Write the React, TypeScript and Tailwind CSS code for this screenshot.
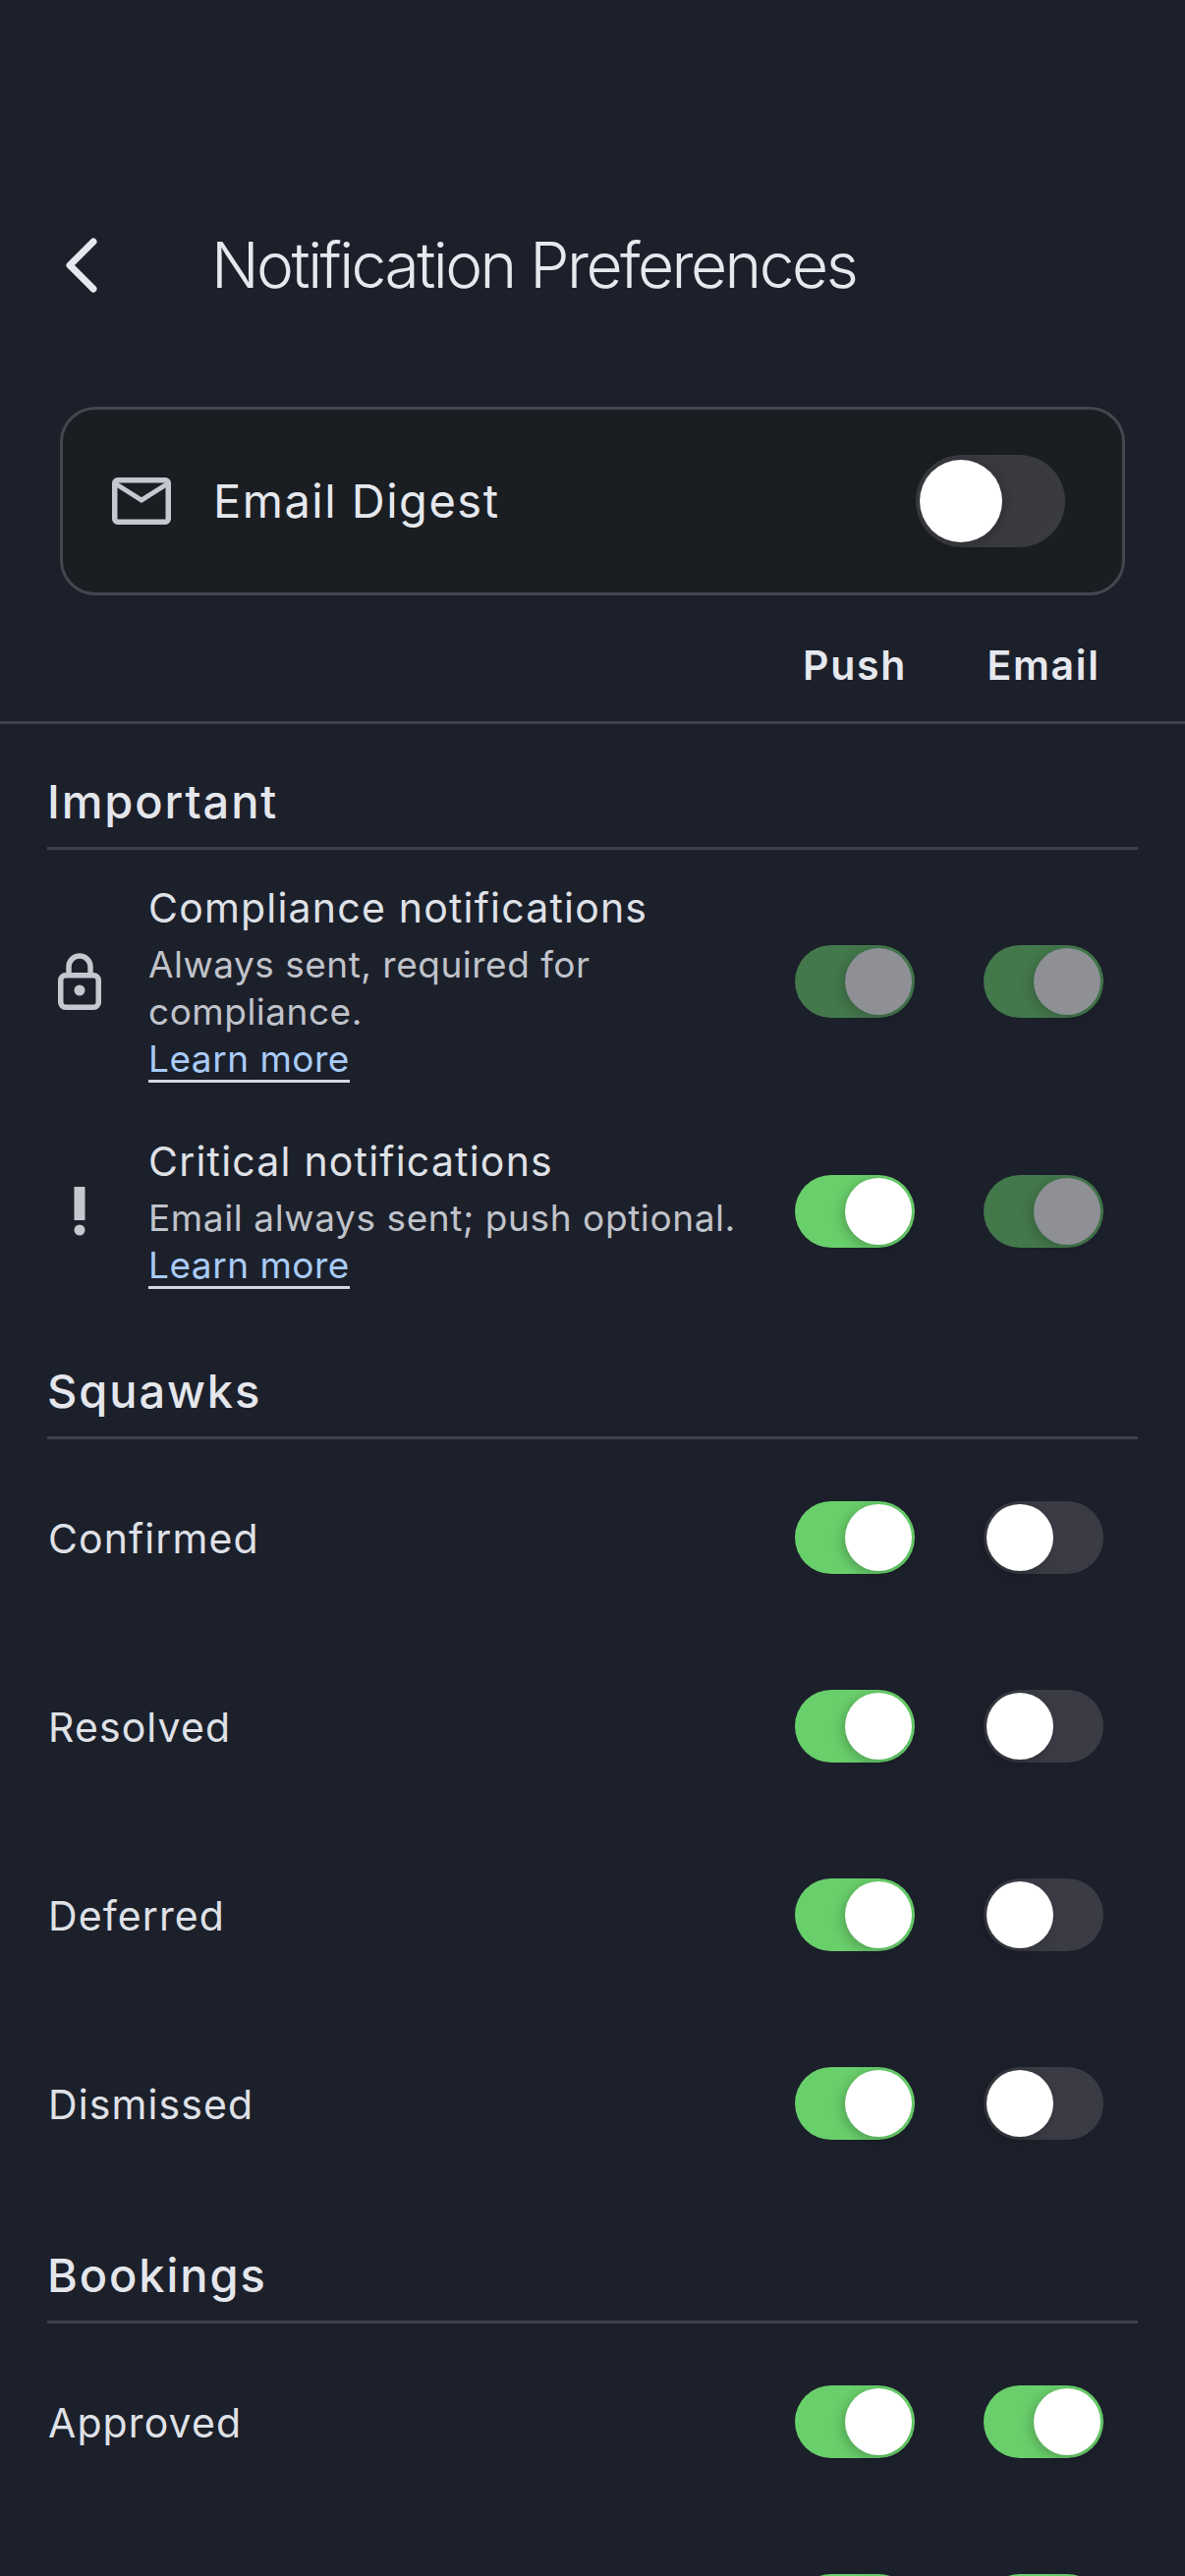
import React from "react";

// Notification preferences screen, dark theme

const Toggle = ({
  on = false,
  disabled = false,
}: {
  on?: boolean;
  disabled?: boolean;
}) => {
  return (
    <div
      className={`flex h-[74px] w-[122px] shrink-0 items-center rounded-full px-[3px] ${
        on ? "justify-end bg-[#69cf6b]" : "justify-start bg-[#3a3b44]"
      } ${disabled ? "opacity-50" : ""}`}
    >
      <div className="h-[68px] w-[68px] rounded-full bg-white shadow-[-3px_3px_12px_rgba(0,0,0,0.22)]" />
    </div>
  );
};

const LearnMore = () => (
  <a className="block w-fit border-b-[3px] border-[#d5d8de] pt-[2px] text-[37px] leading-[43px] tracking-[0.5px] text-[#a9cbf7]">
    Learn more
  </a>
);

const SectionTitle = ({ title }: { title: string }) => (
  <div className="mx-[48px] mb-[4px] flex h-[128px] items-end border-b-[3px] border-[#3f424c] pb-[19px]">
    <span className="text-[47px] font-medium leading-[54px] tracking-[1.9px] text-[#e4e6ec]">
      {title}
    </span>
  </div>
);

const SimpleRow = ({
  label,
  push = true,
  email = false,
}: {
  label: string;
  push?: boolean;
  email?: boolean;
}) => (
  <div className="flex h-[192px] items-center pl-[49px] pr-[83px]">
    <span className="mt-[3px] flex-1 text-[41px] tracking-[1.1px] text-[#dfe1e7]">
      {label}
    </span>
    <div className="flex gap-[70px]">
      <Toggle on={push} />
      <Toggle on={email} />
    </div>
  </div>
);

export default function App() {
  return (
    <div className="h-[2622px] w-[1206px] overflow-hidden bg-[#1c202b] font-['Inter','Noto_Sans',sans-serif]">
      {/* Top bar */}
      <div className="h-[414px] pl-[62px] pt-[232px]">
        <div className="flex h-[76px] items-center">
          <svg width="40" height="64" viewBox="0 0 40 64" fill="none">
            <path d="M33 8 L9 32 L33 56" stroke="#e6e8ee" strokeWidth="7" strokeLinecap="round" strokeLinejoin="round" />
          </svg>
          <h1 className="ml-[113px] text-[64px] font-[350] leading-[76px] tracking-[-2.5px] text-[#e6e8ee]">
            Notification Preferences
          </h1>
        </div>
      </div>

      {/* Email digest card */}
      <div className="mx-[61px] flex h-[192px] items-center rounded-[36px] border-[3px] border-[#44474e] bg-[#1a1d22] pl-[50px] pr-[58px]">
        <svg width="60" height="48" viewBox="0 0 60 48" fill="none">
          <rect x="2.75" y="2.75" width="54.5" height="42.5" rx="3" stroke="#c4c8cf" strokeWidth="5.5" />
          <path d="M3 6 L30 23 L57 6" stroke="#c4c8cf" strokeWidth="5" />
        </svg>
        <span className="ml-[43px] flex-1 text-[47px] tracking-[1.5px] text-[#e6e8ee]">
          Email Digest
        </span>
        <div className="flex h-[94px] w-[152px] items-center rounded-full bg-[#3a3b40] px-[4px]">
          <div className="h-[84px] w-[84px] rounded-full bg-white shadow-[2px_2px_14px_rgba(0,0,0,0.25)]" />
        </div>
      </div>

      {/* Column headings */}
      <div className="flex h-[131px] items-center justify-end gap-[70px] border-b-[3px] border-[#3f424c] pr-[83px] pt-[16px]">
        <span className="w-[122px] text-center text-[41px] font-semibold tracking-[1.7px] text-[#e6e8ee]">
          Push
        </span>
        <span className="w-[122px] text-center text-[41px] font-semibold tracking-[1.7px] text-[#e6e8ee]">
          Email
        </span>
      </div>

      <SectionTitle title="Important" />

      {/* Compliance */}
      <div className="flex h-[260px] items-center pl-[59px] pr-[83px]">
        <svg width="44" height="58" viewBox="0 0 44 58" fill="none" className="shrink-0">
          <rect x="2.75" y="22.75" width="38.5" height="32.5" rx="5" stroke="#c4c8cf" strokeWidth="5.5" />
          <path d="M11 20 V14 a11 11 0 0 1 22 0 V20" stroke="#c4c8cf" strokeWidth="5.5" />
          <circle cx="22" cy="38" r="5.5" fill="#c4c8cf" />
        </svg>
        <div className="ml-[48px] mt-[4px] flex-1">
          <div className="text-[41px] leading-[48px] tracking-[1.2px] text-[#dfe1e7]">
            Compliance notifications
          </div>
          <div className="mt-[10px] w-[520px] text-[37px] leading-[48px] tracking-[0.5px] text-[#c0c3ca]">
            Always sent, required for compliance.
          </div>
          <LearnMore />
        </div>
        <div className="flex gap-[70px]">
          <Toggle on disabled />
          <Toggle on disabled />
        </div>
      </div>

      {/* Critical */}
      <div className="flex h-[208px] items-center pl-[59px] pr-[83px]">
        <svg width="44" height="50" viewBox="0 0 44 50" fill="none" className="shrink-0">
          <rect x="16.5" y="0" width="11" height="34" fill="#c4c8cf" />
          <circle cx="22" cy="44" r="5.5" fill="#c4c8cf" />
        </svg>
        <div className="ml-[48px] mt-[4px] flex-1">
          <div className="text-[41px] leading-[48px] tracking-[1.2px] text-[#dfe1e7]">
            Critical notifications
          </div>
          <div className="mt-[10px] text-[37px] leading-[48px] tracking-[0.6px] text-[#c0c3ca]">
            Email always sent; push optional.
          </div>
          <LearnMore />
        </div>
        <div className="flex gap-[70px]">
          <Toggle on />
          <Toggle on disabled />
        </div>
      </div>

      <SectionTitle title="Squawks" />
      <SimpleRow label="Confirmed" />
      <SimpleRow label="Resolved" />
      <SimpleRow label="Deferred" />
      <SimpleRow label="Dismissed" />

      <SectionTitle title="Bookings" />
      <SimpleRow label="Approved" email />
      <SimpleRow label="" email />
    </div>
  );
}
